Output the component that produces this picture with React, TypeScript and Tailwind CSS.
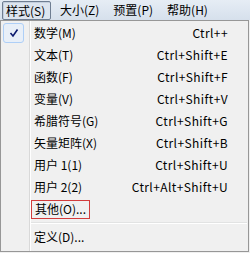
import React from "react";

const items: [string, string][] = [
  ["数学(M)", "Ctrl++"],
  ["文本(T)", "Ctrl+Shift+E"],
  ["函数(F)", "Ctrl+Shift+F"],
  ["变量(V)", "Ctrl+Shift+V"],
  ["希腊符号(G)", "Ctrl+Shift+G"],
  ["矢量矩阵(X)", "Ctrl+Shift+B"],
  ["用户 1(1)", "Ctrl+Shift+U"],
  ["用户 2(2)", "Ctrl+Alt+Shift+U"],
];

export default function App() {
  return (
    <div
      className="w-[250px] h-[253px] overflow-hidden bg-[#f0f0f0] text-[12px] text-black"
      style={{ fontFamily: '"Noto Sans CJK SC", "Microsoft YaHei", sans-serif' }}
    >
      {/* menu bar */}
      <div className="h-[20px] flex items-center bg-gradient-to-b from-[#e6edf5] to-[#d6e0ec] pl-[2px]">
        <div className="h-[19px] mt-[1px] w-[49px] border border-[#6f7e92] bg-[#dde5ef] rounded-[2px] flex items-center pl-[3px] leading-none shadow-[inset_1px_1px_0_#c4cfdd]">
          样式(S)
        </div>
        <div className="ml-[9px] leading-none">大小(Z)</div>
        <div className="ml-[14px] leading-none">预置(P)</div>
        <div className="ml-[14px] leading-none">帮助(H)</div>
      </div>
      {/* dropdown */}
      <div className="relative w-[249px] h-[232px] border border-[#979797] bg-[#f0f0f0] pt-[1px] pb-[2px]">
        <div className="absolute left-[28px] top-0 bottom-0 w-px bg-[#d9d9d9]" />
        <div className="absolute left-[29px] top-0 bottom-0 w-px bg-white" />
        {items.map(([label, sc], i) => (
          <div key={i} className="relative h-[22px] flex items-center">
            <div className="w-[33px] pl-[2px] flex items-center">
              {i === 0 && (
                <div className="w-[21px] h-[20px] rounded-[3px] border border-[#aecff7] bg-[#e8eff8] flex items-center justify-center">
                  <svg width="10" height="10" viewBox="0 0 10 10">
                    <path d="M1.5 5 L4 8 L8.5 1.5" stroke="#0c1a6e" strokeWidth="1.6" fill="none" />
                  </svg>
                </div>
              )}
            </div>
            <div className="flex-1 leading-none">{label}</div>
            <div className="pr-[20px] leading-none tracking-[0.4px]">{sc}</div>
          </div>
        ))}
        <div className="relative h-[22px] flex items-center">
          <div className="w-[30px]" />
          <div className="border border-[#d23c3c] h-[19px] px-[3px] flex items-center leading-none">其他(O)...</div>
        </div>
        <div className="relative h-[6px] ml-[30px] mr-[1px] flex flex-col justify-center">
          <div className="h-px bg-[#e2e3e3]" />
          <div className="h-px bg-white" />
        </div>
        <div className="relative h-[22px] flex items-center">
          <div className="w-[33px]" />
          <div className="leading-none">定义(D)...</div>
        </div>
      </div>
    </div>
  );
}
